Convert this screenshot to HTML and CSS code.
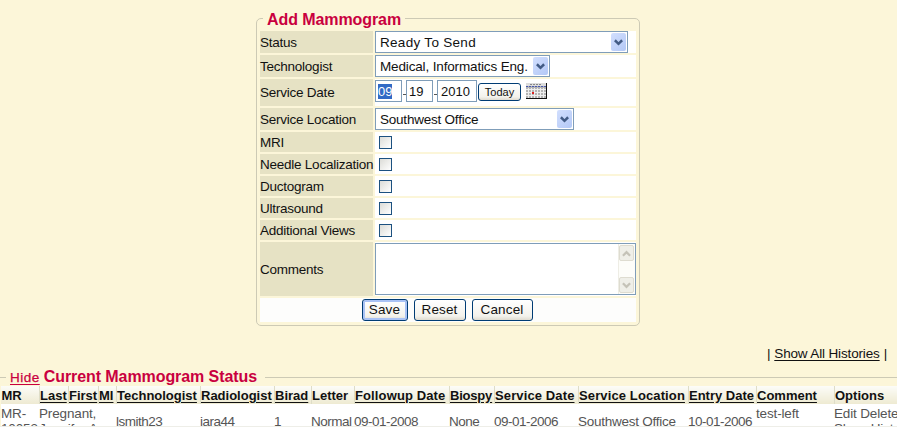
FILE: index.html
```html
<!DOCTYPE html>
<html lang="en"><head><meta charset="utf-8"><title>Add Mammogram</title><link rel="stylesheet" href="styles.css"></head>
<body>
<div class="page">
<main class="panel">
<h1 class="legend">Add Mammogram</h1>
<form class="form">
<label class="label">Status</label><div class="field"><div class="select status"><span>Ready To Send</span><i class="arrow"><svg viewBox="0 0 8 6"><path d="M.8 1 4 4.2 7.2 1"/></svg></i></div></div>
<label class="label">Technologist</label><div class="field"><div class="select tech"><span>Medical, Informatics Eng.</span><i class="arrow"><svg viewBox="0 0 8 6"><path d="M.8 1 4 4.2 7.2 1"/></svg></i></div></div>
<label class="label">Service Date</label><div class="field date"><span class="input"><mark>09</mark></span><b class="dash"></b><span class="input">19</span><b class="dash"></b><span class="input year">2010</span><span class="button today">Today</span>
<svg class="calendar" viewBox="0 0 21 16" shape-rendering="crispEdges"><path fill="#b4b4b4" d="M0 0h21v16H0z"/><path fill="#ddd" d="M0 0h20v3H0z"/><path stroke="#888" stroke-dasharray="2 1" d="M4 1.5h12"/><path stroke="#4858b0" stroke-dasharray="2 1" d="M0 3.5h20"/><path stroke="#eee" d="M0 6.500h20M0 9.500h20M0 12.500h20M2.500 5v10M5.500 5v10M8.500 5v10M11.500 5v10M14.500 5v10M17.500 5v10"/><path fill="#d22" d="M6 9h2v2H6z"/><path fill="none" stroke="#111" d="M0 15.500h20.500V0"/></svg></div>
<label class="label">Service Location</label><div class="field"><div class="select location"><span>Southwest Office</span><i class="arrow"><svg viewBox="0 0 8 6"><path d="M.8 1 4 4.2 7.2 1"/></svg></i></div></div>
<label class="label">MRI</label><div class="field"><i class="check"></i></div>
<label class="label">Needle Localization</label><div class="field"><i class="check"></i></div>
<label class="label">Ductogram</label><div class="field"><i class="check"></i></div>
<label class="label">Ultrasound</label><div class="field"><i class="check"></i></div>
<label class="label">Additional Views</label><div class="field"><i class="check"></i></div>
<label class="label">Comments</label><div class="field"><div class="textarea"><div class="scroll"><i><svg viewBox="0 0 8 6"><path d="M.8 5 4 1.800 7.2 5"/></svg></i><i><svg viewBox="0 0 8 6"><path d="M.8 1 4 4.2 7.2 1"/></svg></i></div></div></div>
<div class="actions"><span class="button save">Save</span><span class="button reset">Reset</span><span class="button cancel">Cancel</span></div>
</form>
</main>
<nav class="history"><span>|</span><a>Show All Histories</a><span>|</span></nav>
<section class="results">
<div class="heading"><i class="corner"></i><a>Hide</a><h2>Current Mammogram Status</h2><hr></div>
<table><colgroup><col class="c1"><col class="c2"><col class="c3"><col class="c4"><col class="c5"><col class="c6"><col class="c7"><col class="c8"><col class="c9"><col class="c10"><col class="c11"><col class="c12"><col class="c13"><col class="c14"><col class="c15"></colgroup>
<thead><tr><th>MR</th><th><a>Last</a></th><th><a>First</a></th><th><a>MI</a></th><th><a>Technologist</a></th><th><a>Radiologist</a></th><th><a>Birad</a></th><th>Letter</th><th class="wide"><a>Followup Date</a></th><th class="tight"><a>Biospy</a></th><th class="wide"><a>Service Date</a></th><th class="wide"><a>Service Location</a></th><th><a>Entry Date</a></th><th><a>Comment</a></th><th>Options</th></tr></thead>
<tbody><tr><td class="top">MR-<br>10053</td><td class="top" colspan="3">Pregnant,<br>Jennifer A</td><td>lsmith23</td><td>jara44</td><td>1</td><td>Normal</td><td>09-01-2008</td><td>None</td><td>09-01-2006</td><td class="office">Southwest Office</td><td>10-01-2006</td><td class="top">test-left</td><td class="top">Edit Delete<br>Show History</td></tr></tbody></table>
</section>
</div>
</body></html>
```
FILE: styles.css
```css
*{box-sizing:border-box}
body{margin:0;background:#fcf6d9;font:13px/15px "Liberation Sans",Arial,sans-serif;color:#111}
.page{display:flow-root;width:897px;height:427px;overflow:hidden;border-bottom:1px solid #eeeee8}
.panel{width:384px;height:308px;margin:18px 0 0 256px;border:1px solid #cdcab5;border-radius:5px;padding:0 3px}
.legend{width:max-content;margin:-8px 0 0 3px;padding:0 4px 0 4px;height:19px;background:#fcf6d9;color:#c9003f;font-size:16px;line-height:18px;letter-spacing:-.08px}
.form{display:grid;grid-template-columns:113px 261px;grid-template-rows:22px 22px 27px 22px repeat(5,20px) 54px 24px;gap:2px;margin-top:1px}
.label{background:#e6e2c4;display:flex;align-items:center;white-space:nowrap;font-size:13.5px;letter-spacing:-.24px}
.field{background:#fff;display:flex;align-items:center}
.select,.input,.textarea{border:1px solid #7f9db9;background:#fff}
.select{height:22px;display:flex;align-items:center;justify-content:space-between;padding:0 1px 0 4px;font-size:13.5px}
.status{width:253px}.tech{width:175px}.location{width:199px}
.status span{letter-spacing:.3px}.tech span{letter-spacing:-.15px}.location span{letter-spacing:-.22px}
.arrow{width:15px;height:18px;border-radius:2px;background:linear-gradient(135deg,#d2dffe,#b3c8f6);display:flex;align-items:center;justify-content:center}
svg{display:block}
.arrow svg{width:9px;height:7px;fill:none;stroke:#425b85;stroke-width:2.200}
.date{align-items:flex-start;padding-top:1px}
.input{width:27px;height:22px;padding:3px 2px;line-height:15px}
.input.year{width:40px;padding-left:3px}
mark{background:#316ac5;color:#fff}
.dash{width:3px;height:1px;background:#555;margin:14px .5px 0}
.button{display:flex;align-items:center;justify-content:center;border:1px solid #003c74;border-radius:3px;background:linear-gradient(#fff,#f3f2ec 80%,#dfdbd0);color:#111}
.today{width:43px;height:18px;margin:3px 0 0 1px;font-size:11px}
.calendar{width:21px;height:16px;margin:3px 0 0 5px}
.check{width:13px;height:13px;margin-left:4px;border:1px solid #1c5180;background:linear-gradient(135deg,#dcdcd7,#fff)}
.textarea{width:261px;height:52px}
.scroll{height:50px;width:17px;margin-left:auto;border-left:1px solid #eeede5;background:#fdfdf9;display:flex;flex-direction:column;justify-content:space-between;padding:1px 0}
.scroll i{height:16px;width:15px;border:1px solid #dedcd0;border-radius:2px;background:#efefe8;display:flex;align-items:center;justify-content:center}
.scroll svg{width:9px;height:7px;fill:none;stroke:#c5c3b8;stroke-width:2}
.actions{grid-column:1/3;background:#fdfdfc;display:flex;justify-content:center;align-items:center;gap:6px;padding-right:2px}
.actions .button{height:22px;font-size:13.5px;letter-spacing:.15px;padding-bottom:1px}
.save{width:46px;box-shadow:inset 0 0 0 2px #a9c2f5}.reset{width:52px}.cancel{width:61px}
.history{display:flex;gap:4px;justify-content:flex-end;margin:20px 10px 0 0;height:15px;font-size:13.5px;letter-spacing:-.15px}
a{text-decoration:underline;text-underline-offset:2px}
.heading{display:flex;height:18px;align-items:center;color:#c9003f;margin:7px 0 0}
.corner{width:6px;border-top:1px solid #cdcab5}
.heading a{margin-left:4px;font-size:13.5px;letter-spacing:.5px;-webkit-text-stroke:.25px #c9003f}
h2{font-size:16px;line-height:18px;margin:0 8px 0 4px;letter-spacing:-.08px}
hr{flex:1;border:0;border-top:1px solid #cdcab5;margin:0}
table{table-layout:fixed;width:926px;margin-left:1px;border-collapse:collapse}
th{height:18px;padding:0 1px 0 .5px;text-align:left;white-space:nowrap;background:linear-gradient(#fcfcf8,#eeead2);border-right:1px solid #deddc8}
.wide{letter-spacing:.12px}.tight{letter-spacing:-.2px}
td{padding:2px 0;background:#fff;color:#555;white-space:nowrap;height:34px;vertical-align:middle;font-size:13.5px;letter-spacing:-.5px}
.office{letter-spacing:-.25px}
.top{vertical-align:top;letter-spacing:-.15px}
.c1{width:38px}.c2{width:29px}.c3{width:30px}.c4{width:18px}.c5{width:84px}.c6{width:74px}.c7{width:37px}.c8{width:43px}.c9{width:95px}.c10{width:45px}.c11{width:84px}.c12{width:110px}.c13{width:68px}.c14{width:78px}.c15{width:93px}
```
